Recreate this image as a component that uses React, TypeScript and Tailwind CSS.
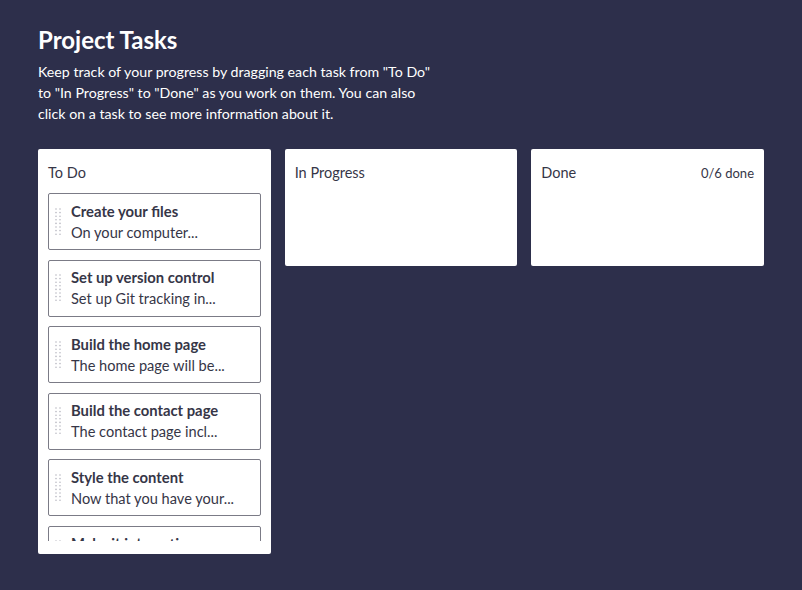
import React from "react";

const tasks = [
  { title: "Create your files", desc: "On your computer..." },
  { title: "Set up version control", desc: "Set up Git tracking in..." },
  { title: "Build the home page", desc: "The home page will be..." },
  { title: "Build the contact page", desc: "The contact page incl..." },
  { title: "Style the content", desc: "Now that you have your..." },
  { title: "Make it interactive", desc: "Add some JavaScript..." },
];

function Handle() {
  const dots = [];
  for (let r = 0; r < 8; r++) {
    for (let c = 0; c < 2; c++) {
      dots.push(<circle key={`${r}-${c}`} cx={1 + c * 4} cy={1 + r * 3.6} r={0.8} fill="#b9b9c2" />);
    }
  }
  return (
    <svg width="6" height="28" viewBox="0 0 6 28" className="shrink-0">
      {dots}
    </svg>
  );
}

function Card({ title, desc }: { title: string; desc: string }) {
  return (
    <div className="flex h-[57px] shrink-0 items-center gap-[10px] rounded-[2px] border border-[#7b7b86] bg-white pl-[6px] pr-2">
      <Handle />
      <div className="flex flex-col leading-[21px] text-[#363647]">
        <span className="text-[14.8px] font-bold">{title}</span>
        <span className="text-[14.6px]">{desc}</span>
      </div>
    </div>
  );
}

export default function App() {
  return (
    <div
      className="min-h-[590px] bg-[#2d2f4b] px-[38px] pt-[24px]"
      style={{ fontFamily: "Lato, 'Open Sans', sans-serif" }}
    >
      <h1 className="text-[24px] font-bold leading-[32px] text-white">Project Tasks</h1>
      <p className="mt-[5px] text-[14.2px] leading-[21px] text-white">
        Keep track of your progress by dragging each task from "To Do"
        <br />
        to "In Progress" to "Done" as you work on them. You can also
        <br />
        click on a task to see more information about it.
      </p>
      <div className="mt-[25px] grid grid-cols-3 items-start gap-[14px]">
        <div className="rounded-[2px] bg-white px-[10px] pb-[13px] pt-[14px] text-[#363647]">
          <div className="text-[14.5px] leading-[20px]">To Do</div>
          <div className="mt-[10px] flex h-[348px] flex-col gap-[9.6px] overflow-hidden">
            {tasks.map((t) => (
              <Card key={t.title} {...t} />
            ))}
          </div>
        </div>
        <div className="h-[117px] rounded-[2px] bg-white px-[10px] pt-[14px] text-[#363647]">
          <div className="text-[14.5px] leading-[20px]">In Progress</div>
        </div>
        <div className="h-[117px] rounded-[2px] bg-white px-[10px] pt-[14px] text-[#363647]">
          <div className="flex justify-between text-[14.5px] leading-[20px]">
            <span>Done</span>
            <span className="text-[13px]">0/6 done</span>
          </div>
        </div>
      </div>
    </div>
  );
}
